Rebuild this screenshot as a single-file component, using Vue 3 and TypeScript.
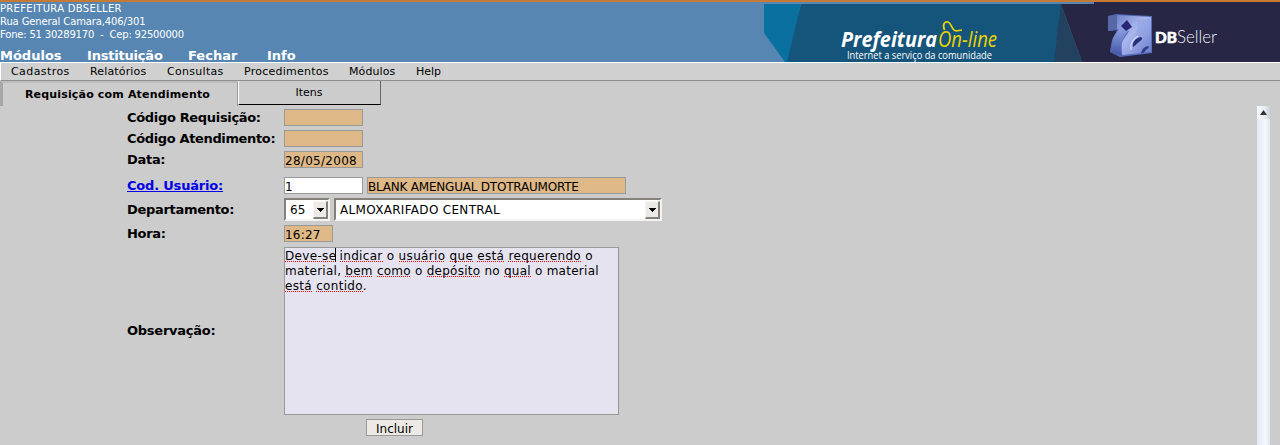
<script setup lang="ts">
import { ref } from 'vue'

interface Item { label: string; cls: string }
interface Piece { text: string; typo?: boolean; caret?: boolean }

const modules: Item[] = [
  { label: 'Módulos', cls: 'm1' },
  { label: 'Instituição', cls: 'm2' },
  { label: 'Fechar', cls: 'm3' },
  { label: 'Info', cls: 'm4' },
]
const menu: Item[] = [
  { label: 'Cadastros', cls: 'n1' },
  { label: 'Relatórios', cls: 'n2' },
  { label: 'Consultas', cls: 'n3' },
  { label: 'Procedimentos', cls: 'n4' },
  { label: 'Módulos', cls: 'n5' },
  { label: 'Help', cls: 'n6' },
]
const note: Piece[][] = [
  [
    { text: 'Deve-se', typo: true }, { text: '', caret: true }, { text: ' ' }, { text: 'indicar', typo: true }, { text: ' o ' },
    { text: 'usuário', typo: true }, { text: ' ' }, { text: 'que', typo: true }, { text: ' ' },
    { text: 'está', typo: true }, { text: ' ' }, { text: 'requerendo', typo: true }, { text: ' o' },
  ],
  [
    { text: 'material, ' }, { text: 'bem', typo: true }, { text: ' ' }, { text: 'como', typo: true },
    { text: ' o ' }, { text: 'depósito', typo: true }, { text: ' no ' }, { text: 'qual', typo: true }, { text: ' o material' },
  ],
  [{ text: 'está', typo: true }, { text: ' ' }, { text: 'contido', typo: true }, { text: '.' }],
]
const activeTab = ref(0)
</script>

<template>
  <div class="page">
    <header class="top">
      <div class="info">
        <div class="address">
          <div><span class="a1">PREFEITURA DBSELLER</span></div>
          <div><span class="a2">Rua General Camara,406/301</span></div>
          <div><span class="a3">Fone: 51 30289170&nbsp; -&nbsp; Cep: 92500000</span></div>
        </div>
        <nav class="modules">
          <span v-for="m in modules" :key="m.label" :class="m.cls">{{ m.label }}</span>
        </nav>
      </div>
      <svg class="banner" width="516" height="60" viewBox="0 0 516 60">
        <defs>
          <linearGradient id="cube" x1="0" y1="0" x2="1" y2="1">
            <stop offset="0" stop-color="#6f84cc" />
            <stop offset=".45" stop-color="#a9b6ec" />
            <stop offset="1" stop-color="#6a7ccb" />
          </linearGradient>
          <linearGradient id="side" x1="0" y1="0" x2="1" y2="1">
            <stop offset="0" stop-color="#4861aa" />
            <stop offset="1" stop-color="#5c70c4" />
          </linearGradient>
          <linearGradient id="body" x1="0" y1="0" x2="0" y2="1">
            <stop offset="0" stop-color="#8c9de0" />
            <stop offset="1" stop-color="#4055a4" />
          </linearGradient>
          <filter id="soft"><feGaussianBlur stdDeviation=".6" /></filter>
        </defs>
        <path d="M37 2H298L291 60H21Z" fill="#15547b" />
        <path d="M0 2H37L23 60H21L0 31Z" fill="#0a70a0" />
        <path d="M297 2L318 60H290Z" fill="#224260" />
        <path d="M297 2H330V0H516V60H318Z" fill="#272644" />
        <text x="77" y="45" class="brand" textLength="96" lengthAdjust="spacingAndGlyphs">Prefeitura</text>
        <text x="174" y="45" class="online" textLength="59" lengthAdjust="spacingAndGlyphs">On-line</text>
        <path d="M180.500 28C178 22 181 19 184 20C187 21 187 25 190 28C192 30 195 28 198 28" fill="none" stroke="#ecd400" stroke-width="1.7" />
        <text x="83" y="56.500" class="slogan" textLength="145" lengthAdjust="spacingAndGlyphs">Internet a serviço da comunidade</text>
        <g filter="url(#soft)">
          <path d="M344 14L352 12L388 14V51L356 55L346 50L348 38L353 28L344 29Z" fill="url(#side)" />
          <path d="M353 13L387 15L387 50L358 53L357 41L365 29L353 27Z" fill="url(#cube)" />
          <path d="M344 14L353 13V28L344 29Z" fill="#5668a8" />
          <path d="M349 36L355 27L365 28C359 34 356 43 358 54L346 50Z" fill="url(#body)" />
          <path d="M363 18L368 25L362 29L357 24Z" fill="#292675" />
          <path d="M369 45C368 41 371 36 377 35C379 36 378 38 375 40C372 42 371 44 369 45Z" fill="#252f78" />
          <path d="M377 51C378 47 381 44 384 44C386 45 384 47 382 48L380 51Z" fill="#33428c" />
          <path d="M374 18L386 17V32L372 34Z" fill="#8fa0e2" opacity=".55" />
          <path d="M367 48C366 42 369 37 374 34" stroke="#cfdbff" stroke-width="1.200" fill="none" />
        </g>
        <text x="391" y="41" class="db" textLength="22" lengthAdjust="spacingAndGlyphs">DB</text>
        <text x="413" y="41" class="seller" textLength="40" lengthAdjust="spacingAndGlyphs">Seller</text>
      </svg>
    </header>

    <nav class="menu">
      <span v-for="n in menu" :key="n.label" :class="n.cls">{{ n.label }}</span>
    </nav>

    <div class="tabs">
      <div class="tab first" :class="{ active: activeTab === 0 }" @click="activeTab = 0"><span>Requisição com Atendimento</span></div>
      <div class="tab second" @click="activeTab = 1"><span>Itens</span></div>
    </div>

    <main class="content">
      <div class="form">
        <div class="row r1"><label><span class="l1">Código Requisição:</span></label><div class="field ro w79"></div></div>
        <div class="row r1"><label><span class="l2">Código Atendimento:</span></label><div class="field ro w79"></div></div>
        <div class="row r2"><label><span>Data:</span></label><div class="field ro w79"><span class="date">28/05/2008</span></div></div>
        <div class="row r1"><label><a class="l4">Cod. Usuário:</a></label><div class="field w79">1</div><div class="field ro w259"><span class="user">BLANK AMENGUAL DTOTRAUMORTE</span></div></div>
        <div class="row r3">
          <label><span class="l5">Departamento:</span></label>
          <div v-for="s in ['65', 'ALMOXARIFADO CENTRAL']" :key="s" class="select" :class="s === '65' ? 'small' : 'large'">
            <span>{{ s }}</span>
            <i class="drop"><svg width="7" height="4" viewBox="0 0 7 4" shape-rendering="crispEdges"><path d="M0 0H7V1H6V2H5V3H4V4H3V3H2V2H1V1H0Z" /></svg></i>
          </div>
        </div>
        <div class="row r4"><label><span>Hora:</span></label><div class="field ro w49"><span class="hour">16:27</span></div></div>
        <div class="row r5">
          <label><span class="l7">Observação:</span></label>
          <div class="note">
            <div v-for="(line, i) in note" :key="i" class="line" :class="'line' + i"><span v-for="(p, j) in line" :key="j" :class="{ typo: p.typo, caret: p.caret }">{{ p.text }}</span></div>
          </div>
        </div>
        <button type="button"><span>Incluir</span></button>
      </div>
      <aside class="scroll"><div class="up"><svg width="7" height="5" viewBox="0 0 7 5"><path d="M0 5L3.5 0L7 5Z" fill="#333" /></svg></div></aside>
    </main>
  </div>
</template>

<style>
body { background: #ccc; overflow: hidden; }
</style>

<style scoped>
.page { width: 1280px; height: 445px; display: flex; flex-direction: column; overflow: hidden; background: #ccc; color: #000; font-family: "DejaVu Sans", sans-serif; font-size: 12px; white-space: pre; }
.page * { box-sizing: border-box; }
.top { height: 62px; flex: none; display: flex; justify-content: space-between; background: #5786b2; border-top: 2px solid #c67a33; color: #fff; }
.address { font-size: 10px; line-height: 13px; height: 44px; }
.a1 { letter-spacing: .32px; } .a2 { letter-spacing: -.12px; } .a3 { letter-spacing: -.19px; }
.modules { display: flex; font-size: 13px; font-weight: bold; line-height: 19px; height: 16px; }
.modules span { flex: none; }
.m1 { width: 87px; } .m2 { width: 101px; letter-spacing: -.2px; } .m3 { width: 79px; }
.banner { display: block; flex: none; }
.brand { font: italic bold 21px "Open Sans", sans-serif; fill: #fff; }
.online { font: italic 21px "Open Sans", sans-serif; fill: #ecd400; }
.slogan { font: 500 10.5px "Open Sans", sans-serif; fill: #fff; }
.db { font: 900 15.5px Lato, sans-serif; fill: #fff; stroke: #fff; stroke-width: .5px; }
.seller { font: 300 18px Lato, sans-serif; fill: #f0f0fa; }
.menu { height: 19px; flex: none; display: flex; background: #d0d0d0; border-top: 1px solid #fff; border-left: 1px solid #fff; border-bottom: 1px solid #8e8e8e; font-size: 11px; line-height: 17px; padding-left: 10px; }
.menu span { flex: none; }
.n1 { width: 79px; letter-spacing: .42px; } .n2 { width: 77px; letter-spacing: .15px; } .n3 { width: 77px; letter-spacing: .3px; } .n4 { width: 105px; letter-spacing: .25px; } .n5 { width: 67px; letter-spacing: .1px; }
.tabs { height: 25px; flex: none; display: flex; font-size: 11px; }
.tab { text-align: center; }
.first { width: 238px; border-left: 3px solid #a7a7a7; border-top: 2px solid #bcbcbc; border-right: 1px solid #999; line-height: 23px; padding-right: 5px; letter-spacing: .17px; }
.first.active { font-weight: bold; }
.second { width: 143px; height: 24px; border-left: 1px solid #fff; border-right: 1px solid #666; border-bottom: 1px solid #000; line-height: 23px; padding-right: 1px; }
.content { flex: 1; display: flex; justify-content: space-between; min-height: 0; }
.form { padding: 3px 0 0 127px; }
.row { display: flex; }
.r1 { height: 21px; } .r2 { height: 26px; } .r3 { height: 27px; } .r4 { height: 22px; } .r5 { height: 172px; }
label { width: 157px; flex: none; font-size: 13px; font-weight: bold; line-height: 17px; letter-spacing: -.3px; }
label a { color: #0000e6; text-decoration: underline; }
.l1 { letter-spacing: -.33px; } .l2 { letter-spacing: -.36px; } .l4 { letter-spacing: -.2px; }
.field { height: 17px; border: 1px solid #999; background: #fff; line-height: 18px; font-size: 12px; margin-right: 4px; }
.ro { background: #deb887; }
.w79 { width: 79px; } .w259 { width: 259px; } .w49 { width: 49px; }
.date { letter-spacing: .28px; } .user { letter-spacing: -.21px; } .hour { letter-spacing: .2px; }
.select { height: 23px; display: flex; justify-content: space-between; background: #fff; border: 2px solid #85827c; border-right-color: #f5f4f2; border-bottom-color: #f5f4f2; line-height: 20px; padding-left: 4px; margin-right: 4px; }
.r3 label { line-height: 23px; }
.small { width: 46px; } .large { width: 328px; letter-spacing: .31px; }
.drop { width: 15px; height: 18px; margin-top: 1px; background: #edeae5; border: 1px solid #f8f7f5; border-right: 2px solid #85827c; border-bottom: 2px solid #85827c; display: flex; align-items: center; justify-content: center; }
.drop svg { display: block; flex: none; }
.r5 label { line-height: 167px; letter-spacing: -.25px; }
.note { width: 335px; height: 168px; border: 1px solid #999; background: #e6e3f1; line-height: 15px; padding-top: 1px; }
.line { height: 15px; }
.line0 { letter-spacing: .33px; } .line1 { letter-spacing: .26px; } .line2 { letter-spacing: .32px; }
.typo { background: repeating-linear-gradient(90deg, #f00 0 1px, transparent 1px 2px) 0 12px / 100% 1px no-repeat; }
.caret { display: inline-block; width: 1px; height: 14px; margin: -1px -1px 0 -1px; background: #000; vertical-align: top; }
button { display: block; margin: 0 0 0 239px; padding: 0; width: 57px; height: 17px; border: 1px solid #999; background: #edeae5; color: #000; font: 12px/17px "DejaVu Sans", sans-serif; }
button span { display: block; padding-top: 1px; }
.scroll { width: 13px; margin-right: 10px; background: linear-gradient(90deg, #e2e8f2, #f5f8ff 65%, #dfe3ec); }
.up { height: 13px; display: flex; align-items: center; justify-content: center; background: linear-gradient(90deg, #f7f9fd, #e6ebf5 60%, #cbd0da); }
</style>
